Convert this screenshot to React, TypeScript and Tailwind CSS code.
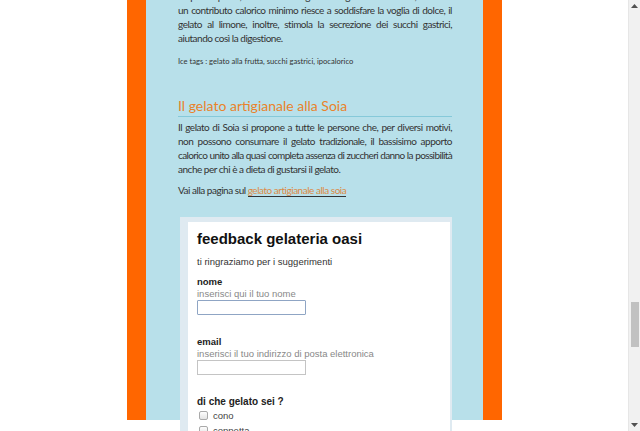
import React from "react";

const arial = "font-['Liberation_Sans',Arial,sans-serif]";
const bodyFont = "font-['Lato',sans-serif] text-[10px]";

function JLine({ text, last = false, tight = false }: { text: string; last?: boolean; tight?: boolean }) {
  return (
    <div
      className={`${bodyFont} ${tight ? "tracking-[-0.62px]" : "tracking-[-0.48px]"} h-[14px] leading-[14px] whitespace-nowrap ${
        last ? "text-left" : "text-justify [text-align-last:justify]"
      }`}
    >
      {text}
    </div>
  );
}

function Checkbox({ label }: { label: string }) {
  return (
    <div className="flex items-center h-[15px] pl-[2px]">
      <span className="w-[9px] h-[9px] border border-[#a9a9a9] rounded-[2px] bg-gradient-to-b from-[#fdfdfd] to-[#e4e4e4]" />
      <span className={`${arial} ml-[5px] text-[9.5px] text-[#444] leading-[15px]`}>{label}</span>
    </div>
  );
}

export default function App() {
  return (
    <div className="w-[640px] h-[431px] overflow-hidden flex bg-white">
      <div className="flex-1 h-full overflow-hidden">
        <div className="ml-[127px] w-[375px] h-full border-x-[19px] border-[#ff6600] bg-[#b8e0ea]">
          <div className="pl-[32px] pr-[31px] text-[#333]">
            <div className="mt-[-11px]">
              <JLine text="Dopo un pasto, il sorbetto o il gelato artigianale alla frutta, che con" />
              <JLine text="un contributo calorico minimo riesce a soddisfare la voglia di dolce, il" />
              <JLine text="gelato al limone, inoltre, stimola la secrezione dei succhi gastrici," />
              <JLine last text="aiutando così la digestione." />
            </div>
            <p className="mt-[10px] font-['Lato',sans-serif] text-[7.6px] leading-[12px]">
              Ice tags : gelato alla frutta, succhi gastrici, ipocalorico
            </p>
            <h2 className="mt-[30px] font-['Lato',sans-serif] text-[14px] leading-[18px] text-[#e9832b] border-b border-[#86c9d9] pb-[1px]">
              Il gelato artigianale alla Soia
            </h2>
            <div className="mt-[3px]">
              <JLine text="Il gelato di Soia si propone a tutte le persone che, per diversi motivi," />
              <JLine text="non possono consumare il gelato tradizionale, il bassisimo apporto" />
              <JLine tight text="calorico unito alla quasi completa assenza di zuccheri danno la possibilità" />
              <JLine last text="anche per chi è a dieta di gustarsi il gelato." />
            </div>
            <p className={`${bodyFont} tracking-[-0.48px] mt-[7px] leading-[14px]`}>
              Vai alla pagina sul{" "}
              <span className="text-[#dc8a45] border-b border-[#333]">gelato artigianale alla soia</span>
            </p>
            <div className="mt-[20px] ml-[2px] bg-[#dfeaf1] pl-[8px] pt-[5px] pr-[2px] h-[240px]">
              <div className={`${arial} bg-white h-full pl-[9px] pt-[8px] text-[#222]`}>
                <div className="text-[15px] font-bold leading-[18px] text-[#111]">feedback gelateria oasi</div>
                <div className="mt-[8px] text-[9.5px] leading-[12px] text-[#333]">ti ringraziamo per i suggerimenti</div>
                <div className="mt-[8px] text-[9.5px] font-bold leading-[12px] text-[#222]">nome</div>
                <div className="text-[9.5px] leading-[11px] text-[#888]">inserisci qui il tuo nome</div>
                <div className="mt-[1px] w-[109px] h-[15px] border border-[#8fa5c4] rounded-[1px] bg-white" />
                <div className="mt-[21px] text-[9.5px] font-bold leading-[12px] text-[#222]">email</div>
                <div className="text-[9.5px] leading-[11px] text-[#888]">inserisci il tuo indirizzo di posta elettronica</div>
                <div className="mt-[1px] w-[109px] h-[15px] border border-[#c4c4c4] bg-white" />
                <div className="mt-[21px] text-[10px] font-bold leading-[12px] text-[#222]">di che gelato sei ?</div>
                <div>
                  <Checkbox label="cono" />
                  <Checkbox label="coppetta" />
                </div>
              </div>
            </div>
          </div>
        </div>
      </div>
      <div className="w-[12px] h-full bg-[#f1f1f1] border-l border-[#e6e6e6] flex flex-col items-center">
        <svg width="7" height="4" viewBox="0 0 7 4" className="mt-[4px]">
          <polygon points="0,4 3.5,0 7,4" fill="#505050" />
        </svg>
        <div className="mt-[294px] w-[8px] h-[45px] bg-[#c1c1c1]" />
        <div className="flex-1" />
        <svg width="7" height="4" viewBox="0 0 7 4" className="mb-[4px]">
          <polygon points="0,0 7,0 3.5,4" fill="#505050" />
        </svg>
      </div>
    </div>
  );
}
